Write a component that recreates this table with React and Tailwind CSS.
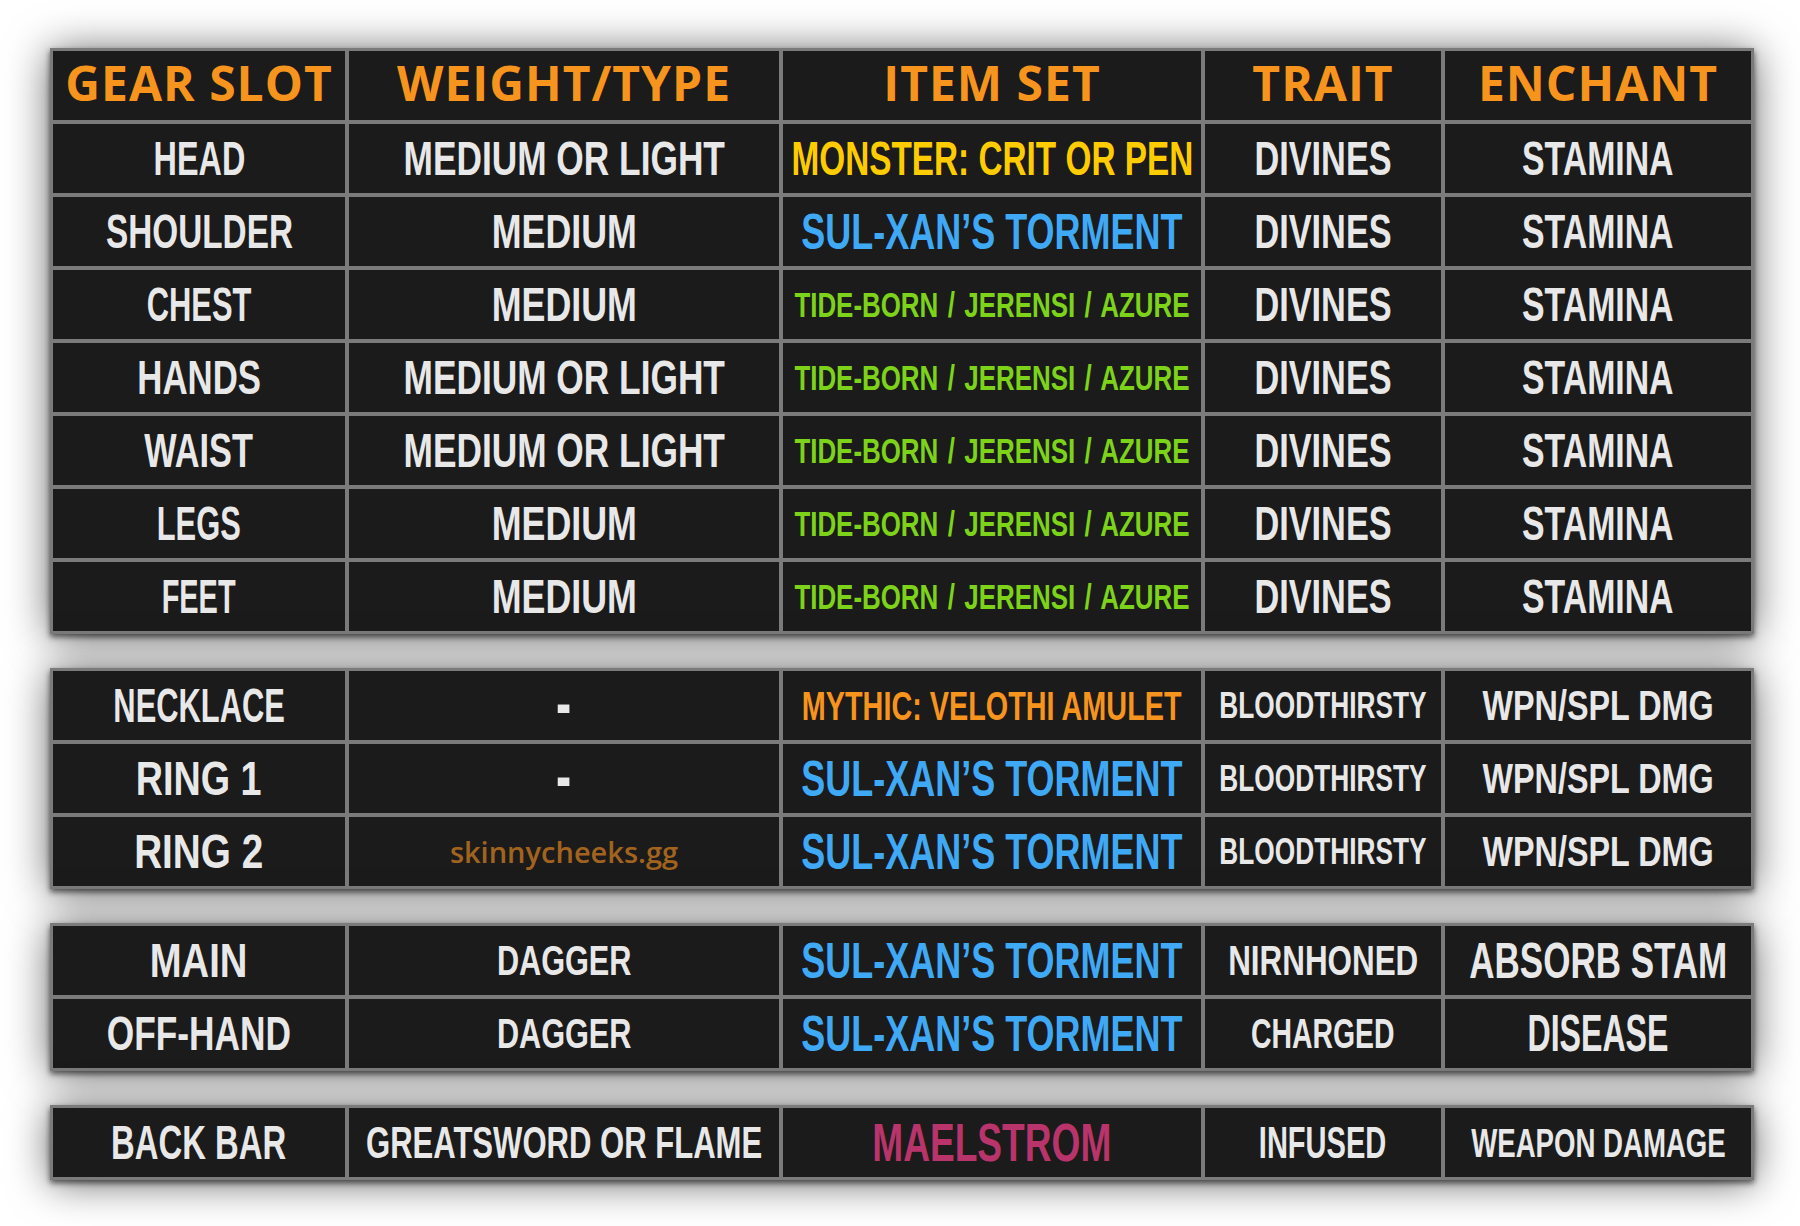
const BODY = "font-['Liberation_Sans',Arial,sans-serif] font-bold";

const DIV = { t: 'DIVINES', s: 'text-[49px] scale-x-[0.70]' };
const STAM = { t: 'STAMINA', s: 'text-[49px] scale-x-[0.69]' };
const MED = { t: 'MEDIUM', s: 'text-[49px] scale-x-[0.73]' };
const MOL = { t: 'MEDIUM OR LIGHT', s: 'text-[49px] scale-x-[0.72]' };
const TIDE = { t: 'TIDE-BORN / JERENSI / AZURE', c: 'text-[#7cd31a]', s: 'text-[35px] scale-x-[0.74] [word-spacing:3px]' };
const SUL = { t: 'SUL-XAN’S TORMENT', c: 'text-[#3fa9f5]', s: 'text-[50px] scale-x-[0.72]' };
const BLOOD = { t: 'BLOODTHIRSTY', s: 'text-[37px] scale-x-[0.71]' };
const WPN = { t: 'WPN/SPL DMG', s: 'text-[42px] scale-x-[0.77]' };
const DAG = { t: 'DAGGER', s: 'text-[42px] scale-x-[0.73]' };
const DASH = { t: '-', s: 'text-[70px] scale-x-[0.65] -translate-y-[3px]' };

const headers = ['GEAR SLOT', 'WEIGHT/TYPE', 'ITEM SET', 'TRAIT', 'ENCHANT'];

const armor = [
  [{ t: 'HEAD', s: 'text-[49px] scale-x-[0.66]' }, MOL, { t: 'MONSTER: CRIT OR PEN', c: 'text-[#ffcc00]', s: 'text-[49px] scale-x-[0.68]' }, DIV, STAM],
  [{ t: 'SHOULDER', s: 'text-[49px] scale-x-[0.68]' }, MED, SUL, DIV, STAM],
  [{ t: 'CHEST', s: 'text-[49px] scale-x-[0.63]' }, MED, TIDE, DIV, STAM],
  [{ t: 'HANDS', s: 'text-[49px] scale-x-[0.71]' }, MOL, TIDE, DIV, STAM],
  [{ t: 'WAIST', s: 'text-[49px] scale-x-[0.70]' }, MOL, TIDE, DIV, STAM],
  [{ t: 'LEGS', s: 'text-[49px] scale-x-[0.63]' }, MED, TIDE, DIV, STAM],
  [{ t: 'FEET', s: 'text-[49px] scale-x-[0.59]' }, MED, TIDE, DIV, STAM],
];

const jewelry = [
  [{ t: 'NECKLACE', s: 'text-[49px] scale-x-[0.63]' }, DASH, { t: 'MYTHIC: VELOTHI AMULET', c: 'text-[#f7941d]', s: 'text-[40px] scale-x-[0.72]' }, BLOOD, WPN],
  [{ t: 'RING 1', s: 'text-[49px] scale-x-[0.77]' }, DASH, SUL, BLOOD, WPN],
  [
    { t: 'RING 2', s: 'text-[49px] scale-x-[0.79]' },
    { t: 'skinnycheeks.gg', c: 'text-[#a2631f]', s: 'text-[29px]', f: "font-['Open_Sans',sans-serif] font-semibold" },
    SUL,
    BLOOD,
    WPN,
  ],
];

const weapons = [
  [{ t: 'MAIN', s: 'text-[49px] scale-x-[0.78]' }, DAG, SUL, { t: 'NIRNHONED', s: 'text-[43px] scale-x-[0.73]' }, { t: 'ABSORB STAM', s: 'text-[50px] scale-x-[0.70]' }],
  [{ t: 'OFF-HAND', s: 'text-[49px] scale-x-[0.72]' }, DAG, SUL, { t: 'CHARGED', s: 'text-[43px] scale-x-[0.66]' }, { t: 'DISEASE', s: 'text-[51px] scale-x-[0.63]' }],
];

const backbar = [
  [
    { t: 'BACK BAR', s: 'text-[49px] scale-x-[0.67]' },
    { t: 'GREATSWORD OR FLAME', s: 'text-[45px] scale-x-[0.69]' },
    { t: 'MAELSTROM', c: 'text-[#b8346a]', s: 'text-[53px] scale-x-[0.70]' },
    { t: 'INFUSED', s: 'text-[44px] scale-x-[0.66]' },
    { t: 'WEAPON DAMAGE', s: 'text-[40px] scale-x-[0.69]' },
  ],
];

function Cell({ t, c = 'text-[#e8e8e8]', s, f = BODY }) {
  return (
    <div className="flex h-[69px] items-center justify-center bg-[#1b1b1b]">
      <span className={`inline-block whitespace-nowrap leading-none ${f} ${c} ${s}`}>{t}</span>
    </div>
  );
}

function Table({ rows, head }) {
  return (
    <div className="grid w-fit grid-cols-[292px_430px_418px_236px_306px] gap-[4px] bg-[#7b7b7b] p-[3px] shadow-[0_3px_6px_rgba(0,0,0,0.6),0_3px_40px_rgba(0,0,0,0.6)]">
      {head &&
        headers.map((h) => (
          <div key={h} className="flex h-[69px] items-center justify-center bg-[#1b1b1b] pb-[6px]">
            <span className="whitespace-nowrap font-['Open_Sans',sans-serif] text-[48px] font-bold leading-none tracking-[1px] text-[#f7941d]">
              {h}
            </span>
          </div>
        ))}
      {rows.map((row, i) => row.map((cell, j) => <Cell key={`${i}-${j}`} {...cell} />))}
    </div>
  );
}

export default function App() {
  return (
    <div className="min-h-screen bg-white pl-[50px] pt-[48px]">
      <div className="flex flex-col gap-[34px]">
        <Table rows={armor} head />
        <Table rows={jewelry} />
        <Table rows={weapons} />
        <Table rows={backbar} />
      </div>
    </div>
  );
}
